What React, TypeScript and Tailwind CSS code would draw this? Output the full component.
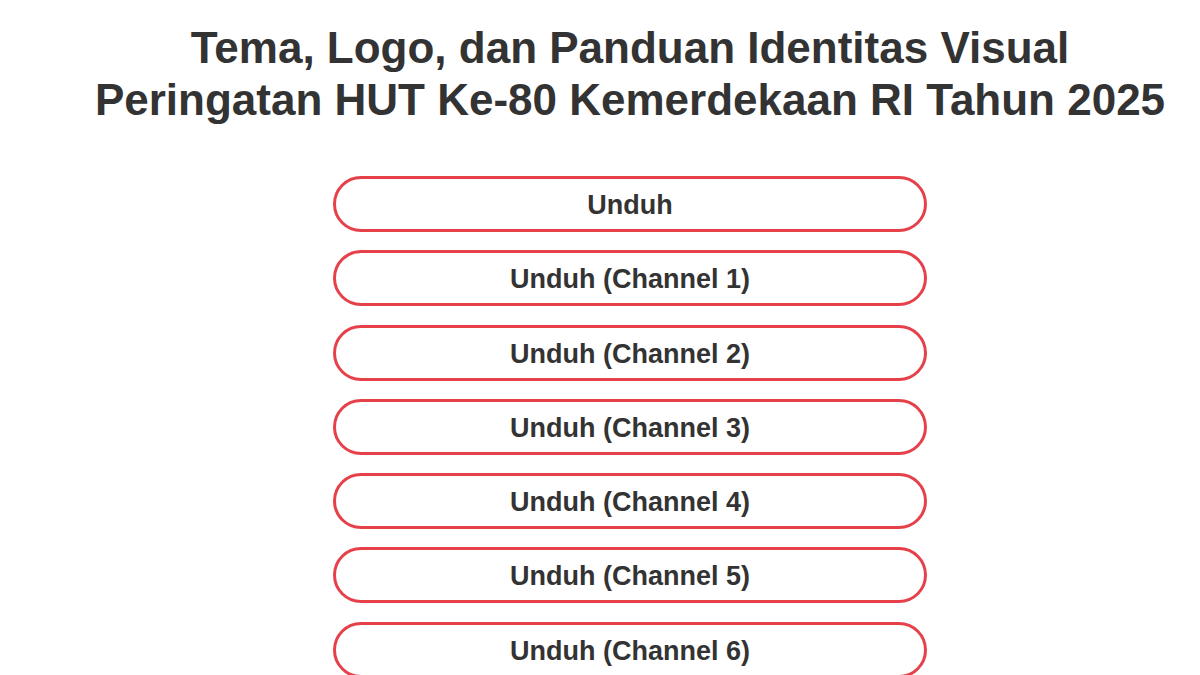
import React from "react";

const labels = [
  "Unduh",
  "Unduh (Channel 1)",
  "Unduh (Channel 2)",
  "Unduh (Channel 3)",
  "Unduh (Channel 4)",
  "Unduh (Channel 5)",
  "Unduh (Channel 6)",
];

export default function App() {
  return (
    <div
      className="w-[1200px] h-[675px] overflow-hidden bg-white pl-[60px] text-[#333333]"
      style={{ fontFamily: '"Liberation Sans", Arial, sans-serif' }}
    >
      <div className="flex flex-col items-center pt-[22px]">
        <h1 className="text-center text-[44px] leading-[52px] font-bold whitespace-nowrap">
          Tema, Logo, dan Panduan Identitas Visual
          <br />
          Peringatan HUT Ke-80 Kemerdekaan RI Tahun 2025
        </h1>
        <div className="mt-[50px] flex flex-col gap-[18.3px]">
          {labels.map((l) => (
            <a
              key={l}
              href="#"
              className="flex h-[56px] w-[594px] items-center justify-center rounded-full border-[3px] border-[#e6404a] pt-[2px] text-[27px] leading-[30px] font-bold text-[#333333]"
            >
              {l}
            </a>
          ))}
        </div>
      </div>
    </div>
  );
}
